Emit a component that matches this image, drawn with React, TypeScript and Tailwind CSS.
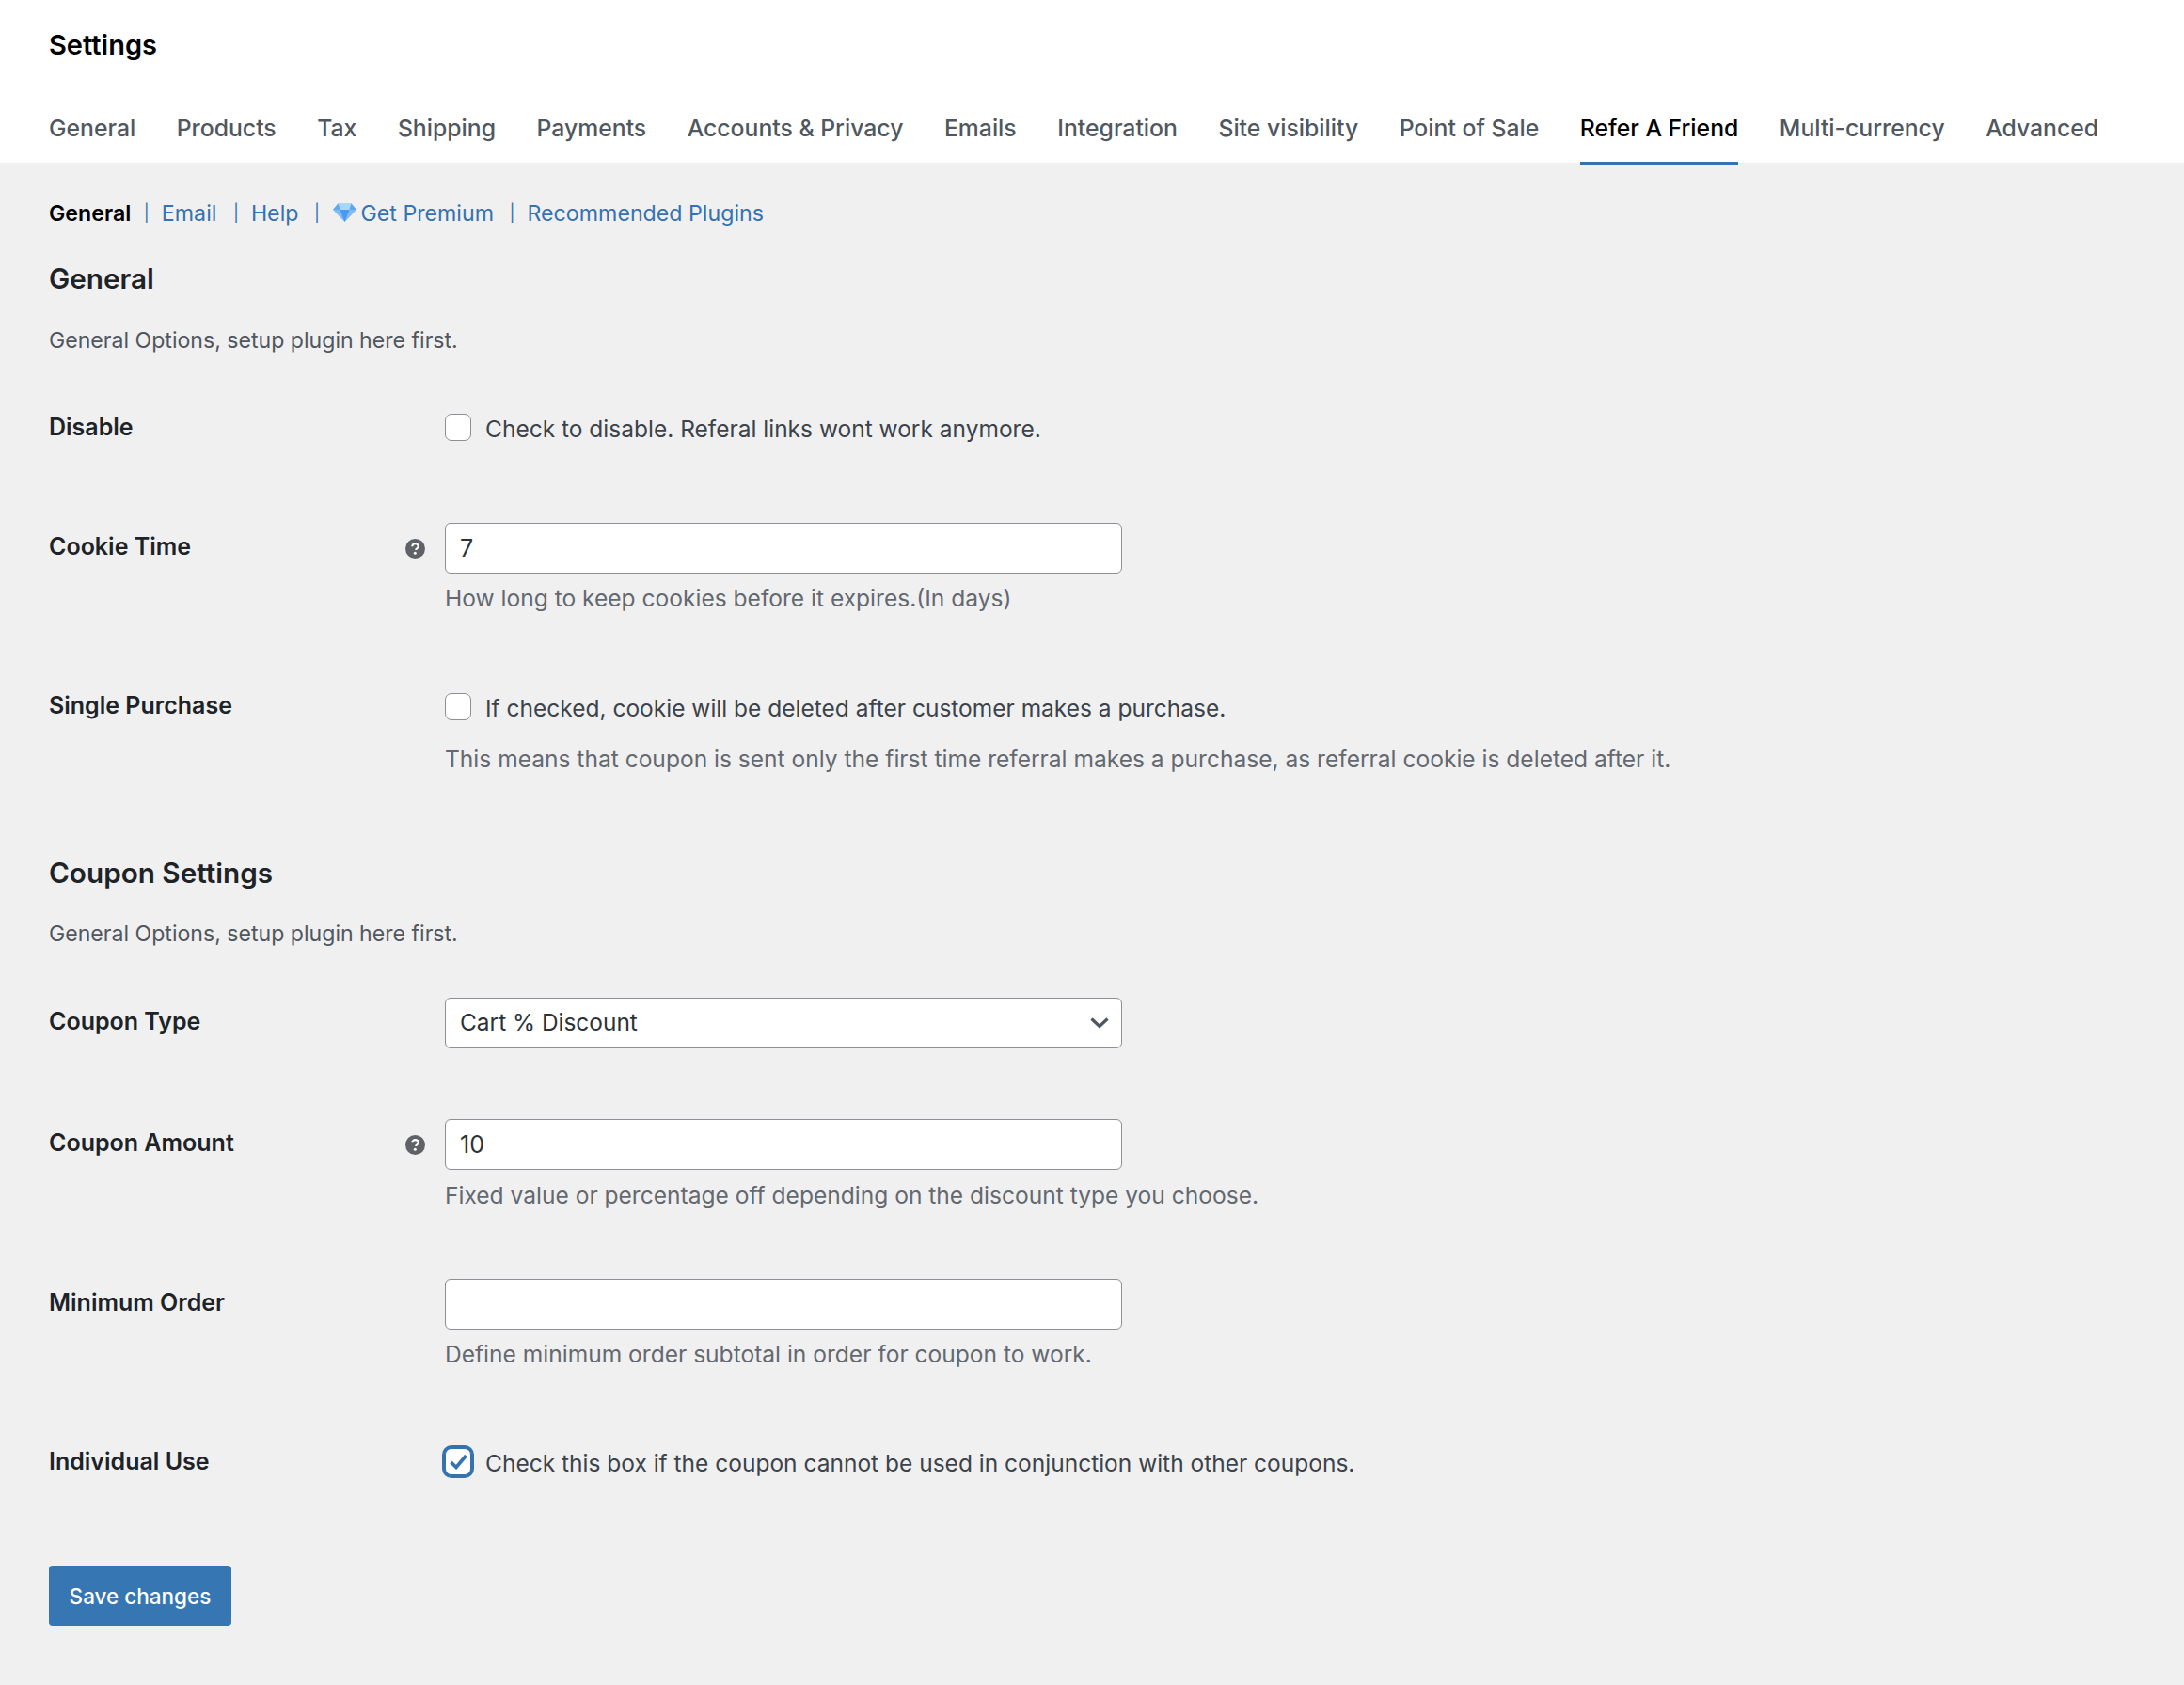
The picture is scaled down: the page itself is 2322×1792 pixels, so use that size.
import React from "react";

const TABS = ["General","Products","Tax","Shipping","Payments","Accounts & Privacy","Emails","Integration","Site visibility","Point of Sale","Refer A Friend","Multi-currency","Advanced"];

function Diamond() {
  return (
    <svg viewBox="0 0 25 20" className="w-[25px] h-[20px] shrink-0 block">
      <path d="M5.5 0.5h14L25 7 12.5 20 0 7z" fill="#7dbcf5" />
      <path d="M7.5 7h10l-5 13z" fill="#4a98f2" />
      <path d="M5.5 0.5h14L17.5 7h-10z" fill="#a9d6fb" />
      <path d="M0 7l5.5-6.5L7.500 7zM25 7l-5.500-6.500L17.500 7z" fill="#5ea6ee" />
    </svg>
  );
}

function Help() {
  return (
    <svg viewBox="0 0 21 21" className="w-[21px] h-[21px] shrink-0 block">
      <circle cx="10.5" cy="10.5" r="10.500" fill="#5f6368" />
      <path d="M7.300 8.200c0-1.900 1.400-3 3.300-3 1.900 0 3.200 1.100 3.200 2.700 0 1.200-.7 1.900-1.600 2.500-.8.500-1 .8-1 1.600" fill="none" stroke="#fff" strokeWidth="2.200" />
      <circle cx="10.300" cy="15.300" r="1.500" fill="#fff" />
    </svg>
  );
}

function Label({ text, help, className }: { text: string; help?: boolean; className: string }) {
  return (
    <div className={"w-[421px] shrink-0 pr-[21px] flex justify-between items-start " + className}>
      <span className="text-[25px] leading-[28px] font-semibold text-[#1d2327]">{text}</span>
      {help && <span className="mt-[6px]"><Help /></span>}
    </div>
  );
}

function Check({ checked, text }: { checked?: boolean; text: string }) {
  return (
    <label className="flex items-center h-[29px]">
      <span className={"relative w-[28px] h-[29px] shrink-0 rounded-[7px] bg-white border " + (checked ? "border-[#3572b0] ring-[3px] ring-[#3572b0]" : "border-[#8c8f94]")}>
        {checked && (
          <svg viewBox="0 0 19 17" className="absolute left-[4px] top-[5px] w-[19px] h-[17px]">
            <path d="M1.500 9L7 14.500 17.500 2" fill="none" stroke="#3572b0" strokeWidth="3.600" />
          </svg>
        )}
      </span>
      <span className="ml-[15px] text-[24.5px] leading-[30px] text-[#3c434a] relative top-[1px]">{text}</span>
    </label>
  );
}

function Field({ value }: { value: string }) {
  return (
    <input
      readOnly
      value={value}
      className="block w-[720px] h-[54px] rounded-[6px] border border-[#8c8f94] bg-white px-[15px] text-[25px] text-[#2c3338] outline-none"
    />
  );
}

function Desc({ className, children }: { className: string; children: React.ReactNode }) {
  return <p className={"text-[24.55px] leading-[30px] text-[#646970] " + className}>{children}</p>;
}

function Intro({ className, children }: { className: string; children: React.ReactNode }) {
  return <p className={"text-[23.1px] leading-[30px] text-[#50575e] " + className}>{children}</p>;
}

export default function App() {
  return (
    <div className="min-h-[1792px] bg-[#f0f0f1] font-['Inter','Liberation_Sans',sans-serif]">
      <header className="relative z-10 h-[173px] bg-white px-[52px]">
        <h1 className="pt-[31px] text-[29px] leading-[34px] font-semibold text-black">Settings</h1>
        <nav className="mt-[32px] flex gap-[43.5px]">
          {TABS.map((t) => (
            <a
              key={t}
              className={
                "h-[78px] pt-[5px] flex items-center border-b-[3px] text-[24.75px] font-medium whitespace-nowrap " +
                (t === "Refer A Friend" ? "border-[#3572b0] text-black" : "border-transparent text-[#50575e]")
              }
            >
              {t}
            </a>
          ))}
        </nav>
      </header>

      <main className="px-[52px] pt-[40px]">
        <ul className="flex items-center text-[23.2px] leading-[28px] text-[#3572b0]">
          <li className="font-semibold text-black">General</li>
          <li className="ml-[13.500px] text-[18px]">|</li>
          <li className="ml-[13px]">Email</li>
          <li className="ml-[17.500px] text-[18px]">|</li>
          <li className="ml-[13px]">Help</li>
          <li className="ml-[16.500px] text-[18px]">|</li>
          <li className="ml-[14px] -mt-[2px]"><Diamond /></li>
          <li className="ml-[4.500px]">Get Premium</li>
          <li className="ml-[16.500px] text-[18px]">|</li>
          <li className="ml-[13px]">Recommended Plugins</li>
        </ul>

        <h2 className="mt-[38px] text-[29.7px] leading-[34px] font-semibold text-[#1d2327]">General</h2>
        <Intro className="mt-[34px]">General Options, setup plugin here first.</Intro>

        <div className="mt-[63px] flex">
          <Label text="Disable" className="mt-0" />
          <Check text="Check to disable. Referal links wont work anymore." />
        </div>

        <div className="mt-[87px] flex">
          <Label text="Cookie Time" help className="pt-[11px]" />
          <div>
            <Field value="7" />
            <Desc className="mt-[11px]">How long to keep cookies before it expires.(In days)</Desc>
          </div>
        </div>

        <div className="mt-[86px] flex">
          <Label text="Single Purchase" className="-mt-[1px]" />
          <div>
            <Check text="If checked, cookie will be deleted after customer makes a purchase." />
            <Desc className="mt-[26px]">This means that coupon is sent only the first time referral makes a purchase, as referral cookie is deleted after it.</Desc>
          </div>
        </div>

        <h2 className="mt-[89px] text-[29.7px] leading-[34px] font-semibold text-[#1d2327]">Coupon Settings</h2>
        <Intro className="mt-[33px]">General Options, setup plugin here first.</Intro>

        <div className="mt-[53px] flex">
          <Label text="Coupon Type" className="pt-[11px]" />
          <div className="relative w-[720px]">
            <select className="block w-full h-[54px] pb-[2px] appearance-none rounded-[6px] border border-[#8c8f94] bg-white px-[15px] text-[24.45px] text-[#2c3338] outline-none">
              <option>Cart % Discount</option>
            </select>
            <svg viewBox="0 0 20 12" className="absolute right-[14px] top-[21px] w-[20px] h-[12px]">
              <path d="M1.500 1.500L10 9.500l8.500-8" fill="none" stroke="#50575e" strokeWidth="3.200" />
            </svg>
          </div>
        </div>

        <div className="mt-[75px] flex">
          <Label text="Coupon Amount" help className="pt-[11px]" />
          <div>
            <Field value="10" />
            <Desc className="mt-[12px]">Fixed value or percentage off depending on the discount type you choose.</Desc>
          </div>
        </div>

        <div className="mt-[74px] flex">
          <Label text="Minimum Order" className="pt-[11px]" />
          <div>
            <Field value="" />
            <Desc className="mt-[11px]">Define minimum order subtotal in order for coupon to work.</Desc>
          </div>
        </div>

        <div className="mt-[85px] flex">
          <Label text="Individual Use" className="mt-0" />
          <Check checked text="Check this box if the coupon cannot be used in conjunction with other coupons." />
        </div>

        <button className="mt-[96px] block w-[194px] h-[64px] pt-[2px] rounded-[4px] bg-[#3576b3] text-[22.5px] font-medium text-white">
          Save changes
        </button>
      </main>
    </div>
  );
}
